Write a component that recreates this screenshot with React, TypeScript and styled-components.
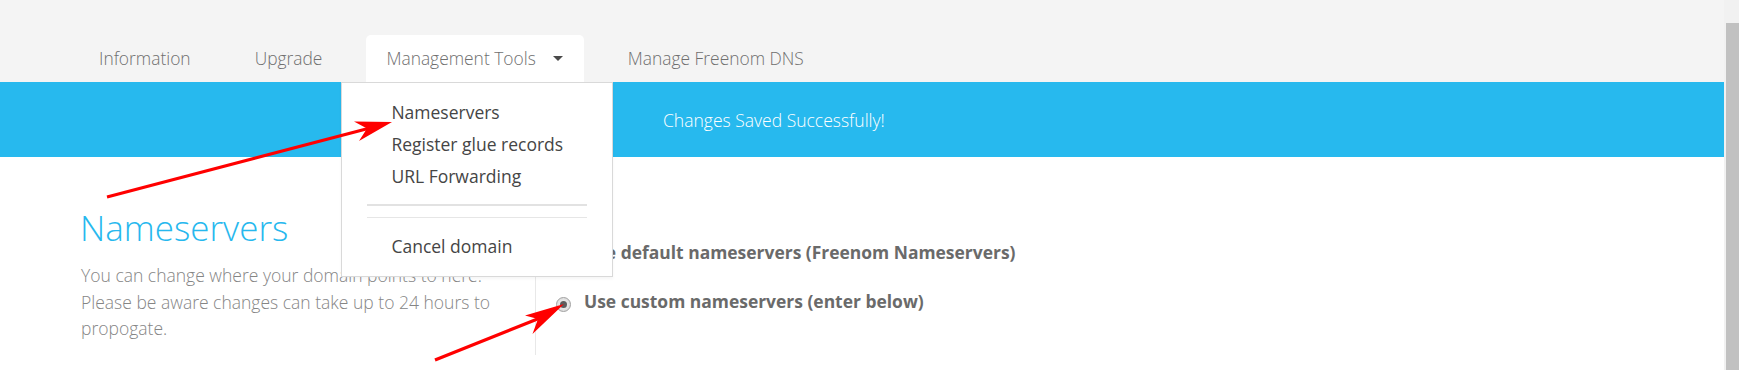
import React from "react";
import styled, { createGlobalStyle } from "styled-components";

const GlobalStyle = createGlobalStyle`
  html, body { margin: 0; padding: 0; background: #fff; overflow: hidden; }
  body { font-family: "Open Sans", "Noto Sans", Arial, sans-serif; }
  * { box-sizing: border-box; }
`;

const Page = styled.div`
  display: flex;
  width: 1739px;
  height: 370px;
  overflow: hidden;
`;

const Main = styled.div`
  position: relative;
  flex: 1;
  min-width: 0;
  background: #fff;
`;

const Header = styled.header`
  height: 82px;
  background: #f4f4f4;
  padding: 35px 0 0 79px;
`;

const Nav = styled.nav`
  display: flex;
  gap: 24px;
  height: 47px;
`;

const Tab = styled.div<{ $active?: boolean }>`
  position: relative;
  display: flex;
  align-items: center;
  height: 47px;
  padding: 0 20px 1px;
  font-size: 17.4px;
  font-weight: 300;
  color: #6f6f6f;
  white-space: nowrap;
  background: ${(p) => (p.$active ? "#fff" : "transparent")};
  border-radius: 5px 5px 0 0;
`;

const Caret = styled.span`
  display: inline-block;
  margin: 0 1px 0 17px;
  width: 0;
  height: 0;
  border-left: 5px solid transparent;
  border-right: 5px solid transparent;
  border-top: 5px solid #4a4a4a;
`;

const Menu = styled.ul`
  position: absolute;
  top: 100%;
  left: -25px;
  width: 272px;
  margin: 0;
  padding: 13px 25px 14px;
  list-style: none;
  background: #fff;
  border: 1px solid #d9d9d9;
  box-shadow: 0 2px 3px rgba(0, 0, 0, 0.04);
  z-index: 10;
`;

const MenuItem = styled.li<{ $separated?: boolean }>`
  padding-left: 24px;
  line-height: 32px;
  font-size: 17.5px;
  font-weight: 400;
  color: #454545;
  white-space: nowrap;
  ${(p) =>
    p.$separated
      ? "border-top: 1px solid #e6e6e6; padding-top: 12px;"
      : ""}
`;

const MenuDivider = styled.li`
  height: 2px;
  margin: 12px 0 11px;
  background: #e2e2e2;
`;

const Banner = styled.div`
  display: flex;
  align-items: center;
  height: 75px;
  padding-left: 663px;
  background: #27b9ee;
  color: #fff;
  font-size: 17.5px;
  font-weight: 300;
`;

const Content = styled.section`
  display: flex;
  padding-left: 81px;
`;

const InfoColumn = styled.div`
  width: 454px;
  padding-top: 50px;
`;

const Title = styled.h1`
  margin: 0 0 0 -1px;
  font-size: 35px;
  line-height: 41px;
  font-weight: 300;
  color: #27b8ee;
`;

const Description = styled.p`
  margin: 14px 0 0;
  max-width: 440px;
  font-size: 17.5px;
  line-height: 26.5px;
  font-weight: 300;
  color: #858585;
`;

const OptionsColumn = styled.div`
  display: flex;
  flex-direction: column;
  gap: 25px;
  margin-top: 30px;
  height: 168px;
  padding: 53px 0 0 20px;
  border-left: 1px solid #e8e8e8;
`;

const OptionRow = styled.label`
  display: flex;
  align-items: center;
  gap: 13px;
  height: 24px;
  font-size: 17.45px;
  font-weight: 700;
  color: #6a6a6a;
  white-space: nowrap;
`;

const Radio = styled.span<{ $checked?: boolean }>`
  position: relative;
  top: 3px;
  flex: none;
  width: 15px;
  height: 15px;
  border-radius: 50%;
  border: 1px solid #a0a0a0;
  background: radial-gradient(circle, #f4f4f4 0%, #d6d6d6 100%);
  &::after {
    content: "";
    display: ${(p) => (p.$checked ? "block" : "none")};
    position: absolute;
    left: 3px;
    top: 3px;
    width: 7px;
    height: 7px;
    border-radius: 50%;
    background: #5e5e5e;
  }
`;

const Annotations = styled.svg`
  position: absolute;
  left: 0;
  top: 0;
  width: 1724px;
  height: 370px;
  pointer-events: none;
  z-index: 20;
`;

const ScrollTrack = styled.div`
  flex: none;
  width: 15px;
  height: 370px;
  background: #f1f1f1;
  padding: 23px 0 0 2px;
`;

const ScrollThumb = styled.div`
  height: 400px;
  background: #c1c1c1;
`;

const tabs = ["Information", "Upgrade", "Management Tools", "Manage Freenom DNS"];
const menuItems = ["Nameservers", "Register glue records", "URL Forwarding"];

export default function App() {
  return (
    <>
      <GlobalStyle />
      <Page>
        <Main>
          <Header>
            <Nav>
              {tabs.map((t) =>
                t === "Management Tools" ? (
                  <Tab key={t} $active>
                    {t}
                    <Caret />
                    <Menu>
                      {menuItems.map((m) => (
                        <MenuItem key={m}>{m}</MenuItem>
                      ))}
                      <MenuDivider />
                      <MenuItem $separated>Cancel domain</MenuItem>
                    </Menu>
                  </Tab>
                ) : (
                  <Tab key={t}>{t}</Tab>
                )
              )}
            </Nav>
          </Header>
          <Banner>Changes Saved Successfully!</Banner>
          <Content>
            <InfoColumn>
              <Title>Nameservers</Title>
              <Description>
                You can change where your domain points to here. Please be aware changes can take up to 24 hours to
                propogate.
              </Description>
            </InfoColumn>
            <OptionsColumn>
              <OptionRow>
                <Radio />
                Use default nameservers (Freenom Nameservers)
              </OptionRow>
              <OptionRow>
                <Radio $checked />
                Use custom nameservers (enter below)
              </OptionRow>
            </OptionsColumn>
          </Content>
          <Annotations viewBox="0 0 1724 370">
            <line x1="107" y1="197" x2="370" y2="128" stroke="#ff0000" strokeWidth="3.2" />
            <polygon points="392,122 354,121.5 367,128.6 359,141" fill="#ff0000" />
            <line x1="435" y1="360" x2="540" y2="318" stroke="#ff0000" strokeWidth="3.2" />
            <polygon points="564,304 525,315.5 538,319 532.5,334" fill="#ff0000" />
          </Annotations>
        </Main>
        <ScrollTrack>
          <ScrollThumb />
        </ScrollTrack>
      </Page>
    </>
  );
}
